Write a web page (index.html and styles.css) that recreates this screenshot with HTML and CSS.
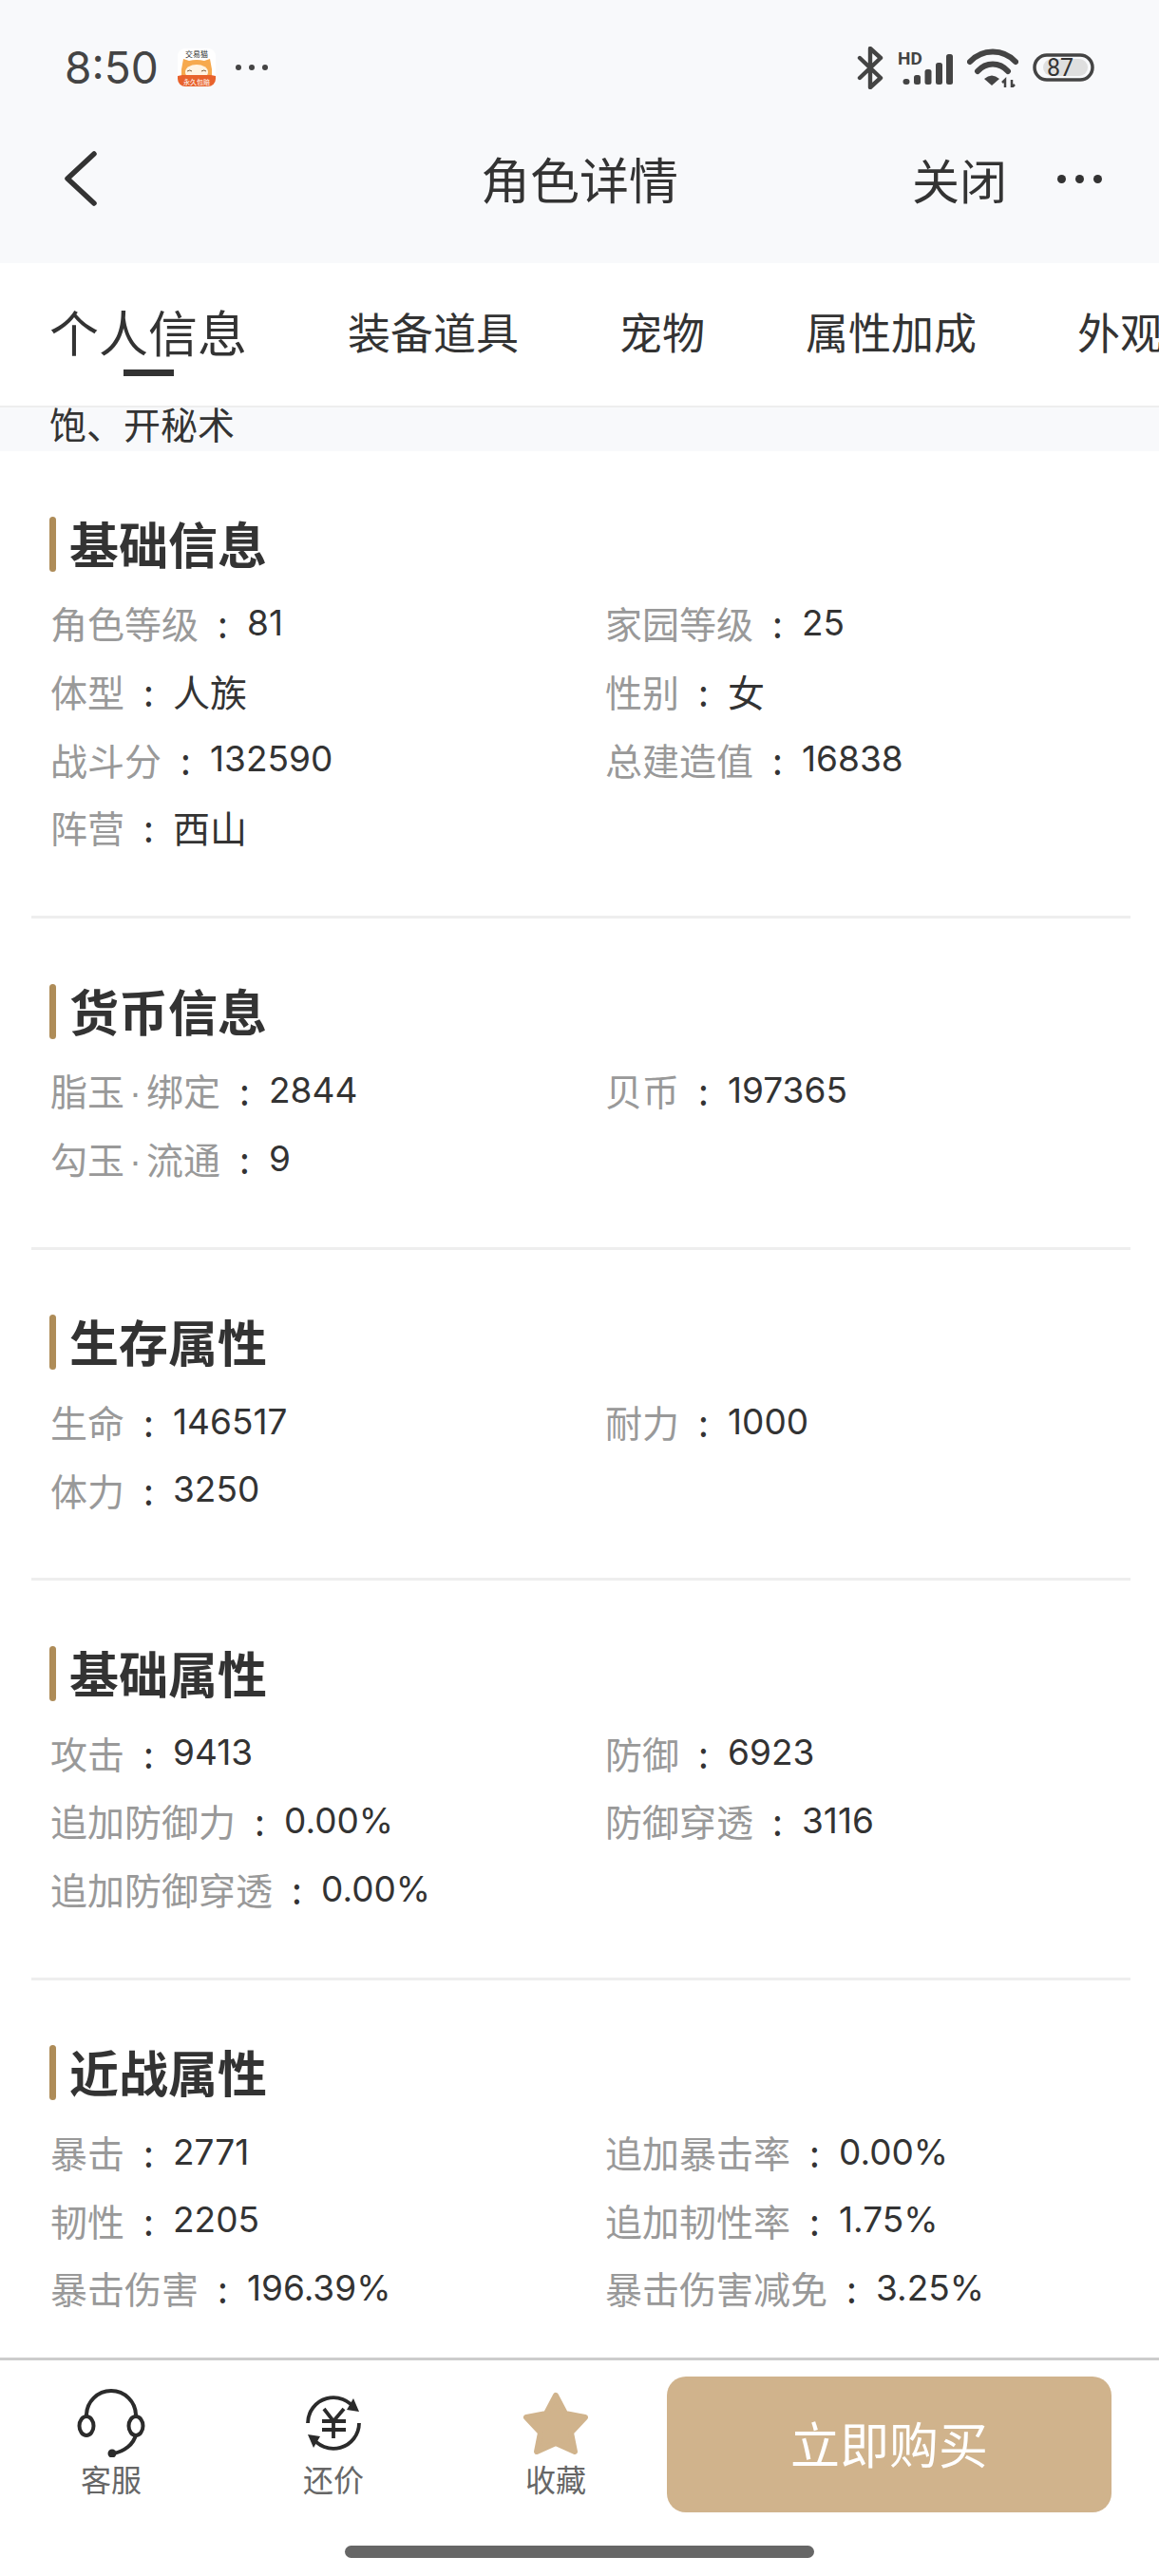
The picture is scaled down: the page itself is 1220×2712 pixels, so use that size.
FILE: index.html
```html
<!DOCTYPE html>
<html lang="zh-CN">
<head>
<meta charset="utf-8">
<title>角色详情</title>
<link rel="stylesheet" href="styles.css">
</head>
<body>
<div class="page">
  <div class="top">
    <div class="status">
      <span class="time">8:50</span>
      <svg class="app-icon" viewBox="0 0 40 40">
        <rect width="40" height="40" rx="8" fill="#fff"/>
        <text x="20" y="8.500" class="app-t1" text-anchor="middle">交易猫</text>
        <path d="M6 11 L12 13 Q20 11 28 13 L34 11 L36 22 V32 H4 V22Z" fill="#f6a94e"/>
        <ellipse cx="20" cy="25" rx="12" ry="8" fill="#fff3e2"/>
        <path d="M10 24q3-2 5 0M25 24q3-2 5 0" fill="none" stroke="#7a5a3a" stroke-width="1"/>
        <path d="M0 29 L5 28 H35 L40 29 V32 A8 8 0 0 1 32 40 H8 A8 8 0 0 1 0 32Z" fill="#e8622c"/>
        <text x="20" y="37.500" class="app-t2" text-anchor="middle">永久包赔</text>
      </svg>
      <span class="st-dots"><i></i><i></i><i></i></span>
      <div class="st-right">
        <svg class="ic-bt" viewBox="0 0 28 45"><path d="M3 12 L25 33 L14 43 V2 L25 12 L3 33" fill="none" stroke="#444" stroke-width="4.400" stroke-linejoin="round" stroke-linecap="round"/></svg>
        <svg class="ic-sig" viewBox="0 0 58 36">
          <text x="0" y="15" class="hd">HD</text>
          <rect x="5.500" y="30" width="7" height="6" rx="3" fill="#444"/>
          <rect x="17" y="26" width="7" height="10" rx="2.500" fill="#444"/>
          <rect x="28.500" y="20" width="7" height="16" rx="2.500" fill="#444"/>
          <rect x="40" y="13" width="7" height="23" rx="2.500" fill="#444"/>
          <rect x="51" y="4" width="7" height="32" rx="2.500" fill="#444"/>
        </svg>
        <svg class="ic-wifi" viewBox="0 0 54 41">
          <path d="M3 14 C16 0 38 0 51 14M11 24 C20 14 34 14 43 24" fill="none" stroke="#444" stroke-width="6" stroke-linecap="round"/>
          <path d="M18 32 Q26 25 34 32 L26 39Z" fill="#444"/>
          <path d="M40 41V33L37 36M47 33V41L50 38" fill="none" stroke="#444" stroke-width="2.500"/>
        </svg>
        <svg class="ic-bat" viewBox="0 0 65 30">
          <rect x="2" y="2" width="61" height="26" rx="13" fill="none" stroke="#444" stroke-width="3.500"/>
          <rect x="11" y="6" width="47" height="18" rx="9" fill="#dfdfdf"/>
          <text x="29" y="24" class="bat-t" text-anchor="middle">87</text>
        </svg>
      </div>
    </div>
    <div class="nav">
      <svg class="ic-back" viewBox="0 0 34 58"><path d="M31 3 L3 29 L31 55" fill="none" stroke="#333" stroke-width="5.500" stroke-linecap="round" stroke-linejoin="round"/></svg>
      <div class="nav-title">角色详情</div>
      <div class="nav-right">
        <span class="nav-close">关闭</span>
        <span class="nav-dots"><i></i><i></i><i></i></span>
      </div>
    </div>
  </div>

  <div class="tabs">
    <div class="tab tab-active">个人信息</div>
    <div class="tab">装备道具</div>
    <div class="tab">宠物</div>
    <div class="tab">属性加成</div>
    <div class="tab">外观</div>
  </div>

  <main class="main">
    <div class="strip">饱、开秘术</div>

    <section class="sec">
      <h2 class="sec-title">基础信息</h2>
      <div class="grid">
        <div class="row"><span class="k">角色等级</span><span class="c">:</span><span class="v n">81</span></div>
        <div class="row"><span class="k">家园等级</span><span class="c">:</span><span class="v n">25</span></div>
        <div class="row"><span class="k">体型</span><span class="c">:</span><span class="v">人族</span></div>
        <div class="row"><span class="k">性别</span><span class="c">:</span><span class="v">女</span></div>
        <div class="row"><span class="k">战斗分</span><span class="c">:</span><span class="v n">132590</span></div>
        <div class="row"><span class="k">总建造值</span><span class="c">:</span><span class="v n">16838</span></div>
        <div class="row"><span class="k">阵营</span><span class="c">:</span><span class="v">西山</span></div>
      </div>
    </section>

    <section class="sec">
      <h2 class="sec-title">货币信息</h2>
      <div class="grid">
        <div class="row"><span class="k">脂玉<span class="mid">·</span>绑定</span><span class="c">:</span><span class="v n">2844</span></div>
        <div class="row"><span class="k">贝币</span><span class="c">:</span><span class="v n">197365</span></div>
        <div class="row"><span class="k">勾玉<span class="mid">·</span>流通</span><span class="c">:</span><span class="v n">9</span></div>
      </div>
    </section>

    <section class="sec">
      <h2 class="sec-title">生存属性</h2>
      <div class="grid">
        <div class="row"><span class="k">生命</span><span class="c">:</span><span class="v n">146517</span></div>
        <div class="row"><span class="k">耐力</span><span class="c">:</span><span class="v n">1000</span></div>
        <div class="row"><span class="k">体力</span><span class="c">:</span><span class="v n">3250</span></div>
      </div>
    </section>

    <section class="sec">
      <h2 class="sec-title">基础属性</h2>
      <div class="grid">
        <div class="row"><span class="k">攻击</span><span class="c">:</span><span class="v n">9413</span></div>
        <div class="row"><span class="k">防御</span><span class="c">:</span><span class="v n">6923</span></div>
        <div class="row"><span class="k">追加防御力</span><span class="c">:</span><span class="v n">0.00%</span></div>
        <div class="row"><span class="k">防御穿透</span><span class="c">:</span><span class="v n">3116</span></div>
        <div class="row"><span class="k">追加防御穿透</span><span class="c">:</span><span class="v n">0.00%</span></div>
      </div>
    </section>

    <section class="sec">
      <h2 class="sec-title">近战属性</h2>
      <div class="grid">
        <div class="row"><span class="k">暴击</span><span class="c">:</span><span class="v n">2771</span></div>
        <div class="row"><span class="k">追加暴击率</span><span class="c">:</span><span class="v n">0.00%</span></div>
        <div class="row"><span class="k">韧性</span><span class="c">:</span><span class="v n">2205</span></div>
        <div class="row"><span class="k">追加韧性率</span><span class="c">:</span><span class="v n">1.75%</span></div>
        <div class="row"><span class="k">暴击伤害</span><span class="c">:</span><span class="v n">196.39%</span></div>
        <div class="row"><span class="k">暴击伤害减免</span><span class="c">:</span><span class="v n">3.25%</span></div>
      </div>
    </section>
  </main>

  <footer class="foot">
    <div class="actions">
      <div class="act">
        <svg class="ic-head" viewBox="0 0 72 72">
          <path d="M10 28 A26 26 0 0 1 62 28M62 48 C60 58 50 66 38 68" fill="none" stroke="#2b2b2b" stroke-width="4"/>
          <ellipse cx="10" cy="39" rx="7.500" ry="10" fill="none" stroke="#2b2b2b" stroke-width="4"/>
          <ellipse cx="62" cy="39" rx="7.500" ry="10" fill="none" stroke="#2b2b2b" stroke-width="4"/>
          <circle cx="37" cy="68" r="4.500" fill="#2b2b2b"/>
        </svg>
        <span class="act-t">客服</span>
      </div>
      <div class="act">
        <svg class="ic-head" viewBox="-6 -5 72 72">
          <path d="M3 31 A27 27 0 0 1 53 17M57 31 A27 27 0 0 1 7 45M20 16 L30 29 L41 16M30 29V47M18 29H43M18 38H43" fill="none" stroke="#2b2b2b" stroke-width="3.800"/>
          <path d="M51 5 L57 19 L44 17Z M9 57 L3 43 L16 45Z" fill="#2b2b2b"/>
        </svg>
        <span class="act-t">还价</span>
      </div>
      <div class="act">
        <svg class="ic-head" viewBox="0 0 72 72">
          <path d="M36 7 L46 26 L67 30 L52 46 L56 66 L36 57 L16 66 L20 46 L5 30 L26 26Z" fill="#d0b38c" stroke="#d0b38c" stroke-width="6" stroke-linejoin="round"/>
        </svg>
        <span class="act-t">收藏</span>
      </div>
      <button class="buy">立即购买</button>
    </div>
    <div class="home-wrap"><div class="home"></div></div>
  </footer>
</div>
</body>
</html>
```

FILE: styles.css
```css
* { box-sizing: border-box; }
html, body { margin: 0; padding: 0; }
body {
  font-family: "Noto Sans CJK SC", "Noto Sans", sans-serif;
  background: #fff;
  color: #333;
}
.page {
  width: 1220px;
  height: 2712px;
  display: flex;
  flex-direction: column;
  overflow: hidden;
}

/* top */
.top { background: #f8f9fb; height: 277px; flex: none; }
.status {
  height: 142px;
  display: flex;
  align-items: center;
  padding: 0 68px;
}
.time {
  font-family: Inter, Roboto, sans-serif;
  font-size: 46px;
  color: #444;
  line-height: 1;
  width: 119px;
}
.app-icon { width: 40px; height: 40px; flex: none; }
.app-t1 { font-size: 8px; fill: #333; }
.app-t2 { font-size: 7px; fill: #fff; }
.st-dots { display: flex; gap: 8px; margin-left: 21px; }
.st-dots i { width: 6px; height: 6px; border-radius: 50%; background: #444; display: block; }
.st-right { margin-left: auto; display: flex; align-items: center; gap: 15px; }
.ic-bt { width: 28px; height: 45px; }
.ic-sig { width: 58px; height: 36px; }
.hd { font-family: Roboto, sans-serif; font-weight: 700; font-size: 19px; fill: #444; }
.ic-wifi { width: 54px; height: 41px; }
.ic-bat { width: 65px; height: 30px; }
.bat-t { font-family: Roboto, sans-serif; font-size: 25px; fill: #333; }

.nav {
  height: 92px;
  display: grid;
  grid-template-columns: 1fr auto 1fr;
  align-items: center;
  padding: 0 60px;
}
.ic-back { width: 34px; height: 58px; display: block; margin-left: 8px; }
.nav-title { font-size: 52px; line-height: 1.2; color: #333; }
.nav-right { display: flex; align-items: center; justify-content: flex-end; gap: 53px; }
.nav-close { font-size: 50px; line-height: 1.2; color: #333; }
.nav-dots { display: flex; gap: 10px; }
.nav-dots i { width: 9px; height: 9px; border-radius: 50%; background: #333; display: block; }

/* tabs */
.tabs {
  flex: none;
  height: 152px;
  background: #fff;
  border-bottom: 2px solid #eee;
  display: flex;
  align-items: center;
  gap: 106px;
  padding: 0 0 6px 52px;
  overflow: hidden;
  white-space: nowrap;
}
.tab { font-size: 45px; line-height: 60px; color: #333; flex: none; }
.tab-active { font-size: 52px; position: relative; }
.tab-active::after {
  content: "";
  position: absolute;
  left: 78px;
  top: 70px;
  width: 53px;
  height: 7px;
  background: #333;
}

/* main */
.main { flex: 1; min-height: 0; overflow: hidden; }
.strip {
  height: 46px;
  background: #f8f9fb;
  padding-left: 52px;
  font-size: 39px;
  line-height: 33px;
  color: #333;
  overflow: hidden;
}
.sec {
  margin: 0 30px 0 33px;
  padding: 68.500px 0 57.800px 19px;
  border-bottom: 3px solid #eee;
}
.sec:last-child { border-bottom: 0; }
.sec-title {
  margin: 0 0 18px;
  height: 58px;
  display: flex;
  font-size: 52px;
  line-height: 55px;
  font-weight: 700;
  color: #333;
}
.sec-title::before {
  content: "";
  width: 7px;
  height: 58px;
  border-radius: 4px;
  background: #ae8c58;
  margin-right: 14px;
}
.grid {
  display: grid;
  grid-template-columns: 584px 1fr;
  grid-auto-rows: 71.700px;
}
.row {
  display: flex;
  align-items: center;
  font-size: 39px;
  white-space: nowrap;
  padding-left: 1px;
}
.k { color: #999; }
.mid { font-family: "Liberation Sans", sans-serif; padding: 0 5px; }
.c { width: 51px; text-align: center; color: #333; }
.v { color: #333; }
.n { font-family: Inter, "Noto Sans", sans-serif; font-size: 37px; }

/* footer */
.foot {
  flex: none;
  height: 230px;
  background: #fff;
  border-top: 3px solid #ccc;
  display: flex;
  flex-direction: column;
}
.actions {
  display: flex;
  padding: 17px 50px 0 0;
  height: 160px;
}
.act {
  width: 234px;
  flex: none;
  display: flex;
  flex-direction: column;
  align-items: center;
  padding-top: 13px;
}
.ic-head { width: 72px; height: 72px; display: block; flex: none; }
.act-t { font-size: 32px; line-height: 44px; color: #666; }
.buy {
  flex: 1;
  height: 143px;
  border: 0;
  border-radius: 20px;
  background: #d0b38c;
  color: #fff;
  font-family: inherit;
  font-size: 52px;
  padding: 0 0 4px;
}
.home-wrap { padding-top: 35px; display: flex; justify-content: center; }
.home { width: 494px; height: 13px; border-radius: 7px; background: #666; }
```
